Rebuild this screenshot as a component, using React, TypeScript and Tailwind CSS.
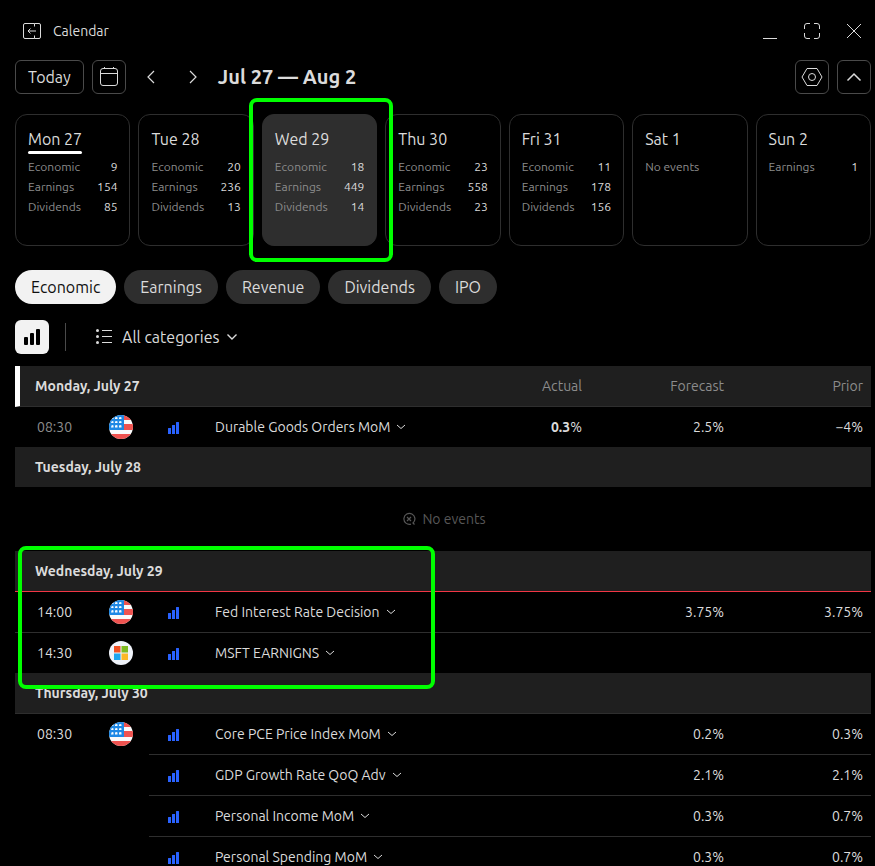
import { Fragment, ReactNode, useState } from "react";

type Day = {
  label: string;
  counts: [string, number][];
  current?: boolean;
  selected?: boolean;
};

type CalendarEvent = {
  time?: string;
  logo?: "us" | "msft";
  past?: boolean;
  name: string;
  actual?: string;
  forecast?: string;
  prior?: string;
};

type Section = {
  title: string;
  columns?: boolean;
  now?: boolean;
  marked?: boolean;
  events: CalendarEvent[];
};

const days: Day[] = [
  { label: "Mon 27", counts: [["Economic", 9], ["Earnings", 154], ["Dividends", 85]], current: true },
  { label: "Tue 28", counts: [["Economic", 20], ["Earnings", 236], ["Dividends", 13]] },
  { label: "Wed 29", counts: [["Economic", 18], ["Earnings", 449], ["Dividends", 14]], selected: true },
  { label: "Thu 30", counts: [["Economic", 23], ["Earnings", 558], ["Dividends", 23]] },
  { label: "Fri 31", counts: [["Economic", 11], ["Earnings", 178], ["Dividends", 156]] },
  { label: "Sat 1", counts: [] },
  { label: "Sun 2", counts: [["Earnings", 1]] },
];

const tabs = ["Economic", "Earnings", "Revenue", "Dividends", "IPO"];

const sections: Section[] = [
  {
    title: "Monday, July 27",
    columns: true,
    events: [
      { time: "08:30", logo: "us", past: true, name: "Durable Goods Orders MoM", actual: "0.3", forecast: "2.5%", prior: "−4%" },
    ],
  },
  { title: "Tuesday, July 28", events: [] },
  {
    title: "Wednesday, July 29",
    now: true,
    marked: true,
    events: [
      { time: "14:00", logo: "us", name: "Fed Interest Rate Decision", forecast: "3.75%", prior: "3.75%" },
      { time: "14:30", logo: "msft", name: "MSFT EARNIGNS" },
    ],
  },
  {
    title: "Thursday, July 30",
    events: [
      { time: "08:30", logo: "us", name: "Core PCE Price Index MoM", forecast: "0.2%", prior: "0.3%" },
      { name: "GDP Growth Rate QoQ Adv", forecast: "2.1%", prior: "2.1%" },
      { name: "Personal Income MoM", forecast: "0.3%", prior: "0.7%" },
      { name: "Personal Spending MoM", forecast: "0.3%", prior: "0.7%" },
    ],
  },
];

function Icon({ size, children }: { size: number; children: ReactNode }) {
  return (
    <svg width={size} height={size} viewBox={`0 0 ${size} ${size}`} fill="none" stroke="currentColor" aria-hidden="true" className="shrink-0">
      {children}
    </svg>
  );
}

function Chevron() {
  return (
    <svg width="10" height="6" viewBox="0 0 10 6" fill="none" stroke="currentColor" aria-hidden="true" className="shrink-0">
      <path d="M1 1l4 3.5L9 1" />
    </svg>
  );
}

function UsFlag() {
  return (
    <svg width="24" height="24" viewBox="0 0 24 24" role="img" aria-label="United States" className="block">
      <clipPath id="flag">
        <circle cx="12" cy="12" r="12" />
      </clipPath>
      <g clipPath="url(#flag)">
        <path fill="#fafafa" d="M0 0h24v24H0z" />
        <path fill="#ef5350" d="M15 0h9v5h-9zM15 9h9v6h-9zM0 19h24v5H0z" />
        <path fill="#1e88e5" d="M0 0h15v15H0z" />
        <g fill="#f5faff">
          <path d="M2 4l.5-1.500L3.500 2l1 .5V4zM6 4V2.500L7.500 2l1 .5V4zM10 4V2.500l1.500-.5 1 .5V4z" />
          <path d="M2 8l.5-1.500L3.500 6l1 .5V8zM6 8V6.500L7.500 6l1 .5V8zM10 8V6.500l1.500-.5 1 .5V8z" />
          <path d="M2 12.500l.5-2 1-.5 1 .5v2zM6 12.500v-2l1.500-.5 1 .5v2zM10 12.500v-2l1.500-.5 1 .5v2z" />
        </g>
      </g>
    </svg>
  );
}

function MsftLogo() {
  return (
    <svg width="24" height="24" viewBox="0 0 24 24" role="img" aria-label="Microsoft" className="block">
      <circle cx="12" cy="12" r="12" fill="#f0f3fa" />
      <path fill="#f25022" d="M5 5h6.500v6.500H5z" />
      <path fill="#7fba22" d="M12.500 5H19v6.500h-6.500z" />
      <path fill="#1ea5f0" d="M5 12.500h6.500V19H5z" />
      <path fill="#fdb827" d="M12.500 12.500H19V19h-6.500z" />
    </svg>
  );
}

function DayCard({ day }: { day: Day }) {
  return (
    <li className="relative min-w-0">
      <button
        type="button"
        className={`flex h-33 w-full flex-col items-start rounded-xl border border-[#2e2e2e] px-3 pt-3 text-left ${
          day.selected ? "bg-[#2e2e2e]" : ""
        }`}
      >
        <span className="relative mb-1.5 text-base leading-6">
          {day.label}
          {day.current && <span className="absolute inset-x-0 top-full h-[3px] rounded-sm bg-white" />}
        </span>
        {day.counts.length === 0 && <span className="text-xs leading-5 text-[#8c8c8c]">No events</span>}
        {day.counts.map(([name, count]) => (
          <span key={name} className="flex w-full justify-between text-xs leading-5">
            <span className="text-[#8c8c8c]">{name}</span>
            <span>{count}</span>
          </span>
        ))}
      </button>
      {day.selected && (
        <div className="pointer-events-none absolute -top-4 -right-4 -bottom-4 -left-[13px] z-10 rounded-lg border-4 border-[#00ff00]" />
      )}
    </li>
  );
}

function EventRow({ event, open, last }: { event: CalendarEvent; open: boolean; last: boolean }) {
  const line = last ? "" : "border-b border-[#2e2e2e]";
  // rows that share a time leave the left side open
  const leftLine = open && !last ? "border-b border-transparent" : line;

  return (
    <tr className={last ? "h-10" : "h-[41px]"}>
      <td className={`pl-[22px] ${leftLine} ${event.past ? "text-[#8c8c8c]" : ""}`}>{event.time}</td>
      <td className={leftLine}>
        {event.logo === "us" && <UsFlag />}
        {event.logo === "msft" && <MsftLogo />}
      </td>
      <td className={`pt-0.5 pl-[19px] ${line}`}>
        <svg width="12" height="12" viewBox="0 0 12 12" fill="#2962ff" role="img" aria-label="High importance" className="block">
          <path d="M0 6.500Q0 6 .5 6H3v6H0zM4 3.500Q4 3 4.500 3H7v9H4zM8 .5Q8 0 8.500 0h2q.5 0 .5.5V12H8z" />
        </svg>
      </td>
      <td className={line}>
        <button type="button" className="flex items-center gap-1.5">
          {event.name}
          <Chevron />
        </button>
      </td>
      <td className={`pr-2 text-right ${line}`}>
        {event.actual && (
          <>
            <b>{event.actual}</b>%
          </>
        )}
      </td>
      <td className={`pr-2 text-right ${line}`}>{event.forecast}</td>
      <td className={`pr-2 text-right ${line}`}>{event.prior}</td>
    </tr>
  );
}

export default function App() {
  const [tab, setTab] = useState("Economic");

  return (
    <div className="flex h-screen flex-col overflow-hidden bg-black pr-1 pl-[15px] font-['Ubuntu','Noto_Sans',sans-serif] text-sm text-[#dbdbdb]">
      {/* Window bar */}
      <header className="flex h-15 shrink-0 items-center justify-between px-2 pt-0.5">
        <div className="flex items-center gap-3">
          <Icon size={18}>
            <path d="M11.500 1.500H2q-1.500 0-1.500 1.500v12q0 1.500 1.500 1.500h9.500M11.500 1.500H16q1.500 0 1.500 1.500v12q0 1.500-1.500 1.500h-4.500M11.500 1.500v3M11.500 13.500v3M13 9H5M7.500 6.500L5 9l2.500 2.500" />
          </Icon>
          <h1>Calendar</h1>
        </div>
        <div className="flex items-center gap-6">
          <button type="button" aria-label="Minimize">
            <Icon size={18}>
              <path d="M2 16.500h14" />
            </Icon>
          </button>
          <button type="button" aria-label="Maximize">
            <Icon size={18}>
              <path d="M1.500 7V4q0-2.500 2.500-2.500h3M11 1.500h3q2.500 0 2.500 2.500v3M16.500 11v3q0 2.500-2.500 2.500h-3M7 16.500H4q-2.500 0-2.500-2.500v-3" />
            </Icon>
          </button>
          <button type="button" aria-label="Close">
            <Icon size={18}>
              <path d="M2 2l14 14M16 2L2 16" />
            </Icon>
          </button>
        </div>
      </header>

      {/* Week navigation */}
      <div className="flex shrink-0 items-center">
        <button type="button" className="h-[34px] rounded-md border border-[#4a4a4a] px-3 text-base">
          Today
        </button>
        <button type="button" aria-label="Pick a date" className="ml-2 flex size-[34px] items-center justify-center rounded-md border border-[#4a4a4a]">
          <Icon size={20}>
            <path d="M4 1.500h12q2.500 0 2.500 2.500v12q0 2.500-2.500 2.500H4q-2.500 0-2.500-2.500V4q0-2.500 2.500-2.500zM1.500 6.500h17M5.500 0v2M14.500 0v2" />
          </Icon>
        </button>
        <button type="button" aria-label="Previous week" className="ml-2 flex size-[34px] items-center justify-center">
          <Icon size={16}>
            <path d="M11 2L5 8l6 6" strokeWidth="1.200" />
          </Icon>
        </button>
        <button type="button" aria-label="Next week" className="ml-2 flex size-[34px] items-center justify-center">
          <Icon size={16}>
            <path d="M5 2l6 6-6 6" strokeWidth="1.200" />
          </Icon>
        </button>
        <h2 className="ml-2 text-xl font-bold">Jul 27 — Aug 2</h2>
        <div className="ml-auto flex gap-2">
          <button type="button" aria-label="Settings" className="flex size-[34px] items-center justify-center rounded-md border border-[#4a4a4a]">
            <Icon size={22}>
              <path d="M6 2.500h10L21 11l-5 8.500H6L1 11z" />
              <circle cx="11" cy="11" r="3.500" />
            </Icon>
          </button>
          <button type="button" aria-label="Collapse" className="flex size-[34px] items-center justify-center rounded-md border border-[#4a4a4a]">
            <Icon size={16}>
              <path d="M1.500 11.500L8 5l6.500 6.500" strokeWidth="1.500" />
            </Icon>
          </button>
        </div>
      </div>

      <ul className="mt-5 grid shrink-0 grid-cols-7 gap-2">
        {days.map((day) => (
          <DayCard key={day.label} day={day} />
        ))}
      </ul>

      {/* Event type tabs */}
      <div className="mt-6 flex shrink-0 gap-2">
        {tabs.map((name) => (
          <button
            key={name}
            type="button"
            onClick={() => setTab(name)}
            className={`h-[34px] rounded-full px-4 text-base ${
              tab === name ? "bg-[#f2f2f2] text-[#0f0f0f]" : "bg-[#2e2e2e]"
            }`}
          >
            {name}
          </button>
        ))}
      </div>

      {/* Filters */}
      <div className="mt-4 flex shrink-0 items-center">
        <button type="button" aria-label="High importance only" className="flex size-[34px] items-center justify-center rounded-md bg-[#f2f2f2] text-black">
          <svg width="18" height="18" viewBox="0 0 18 18" fill="currentColor" aria-hidden="true">
            <rect x="1" y="9" width="4" height="8" rx="1" />
            <rect x="7" y="5" width="4" height="12" rx="1" />
            <rect x="13" y="1" width="4" height="16" rx="1" />
          </svg>
        </button>
        <div className="mx-4 h-7 w-px bg-[#4a4a4a]" />
        <button type="button" className="ml-3.5 flex items-center gap-2 text-base">
          <Icon size={18}>
            <path d="M6 2.500h10M6 8.500h10M6 14.500h10" />
            <g fill="currentColor" stroke="none">
              <circle cx="1.500" cy="2.500" r="1.500" />
              <circle cx="1.500" cy="8.500" r="1.500" />
              <circle cx="1.500" cy="14.500" r="1.500" />
            </g>
          </Icon>
          All categories
          <svg width="10" height="6" viewBox="0 0 10 6" fill="none" stroke="currentColor" aria-hidden="true">
            <path d="M.5.5L5 5 9.500.5" strokeWidth="1.400" />
          </svg>
        </button>
      </div>

      {/* Events */}
      <div className="mt-3 min-h-0 flex-1 overflow-y-auto [scrollbar-width:none]">
        <table className="w-full table-fixed border-separate border-spacing-0">
          <colgroup>
            <col className="w-[94px]" />
            <col className="w-10" />
            <col className="w-[66px]" />
            <col />
            <col className="w-[110px]" />
            <col className="w-[142px]" />
            <col className="w-[139px]" />
          </colgroup>
          <tbody>
            {sections.map((section) => {
              const line = section.now ? "border-b border-b-[#f23645]" : section.events.length ? "border-b border-b-[#2e2e2e]" : "";
              return (
                <Fragment key={section.title}>
                  <tr className={`bg-[#1f1f1f] ${line ? "h-[41px]" : "h-10"}`}>
                    <th
                      colSpan={4}
                      className={`relative text-left font-bold ${line} ${
                        section.columns ? "border-l-[5px] border-l-white pl-[15px]" : "pl-5"
                      }`}
                    >
                      {section.title}
                      {section.marked && (
                        <div className="pointer-events-none absolute -top-[5px] left-[3px] z-10 h-[143px] w-[417px] rounded-lg border-4 border-[#00ff00]" />
                      )}
                    </th>
                    {["Actual", "Forecast", "Prior"].map((name) => (
                      <th key={name} className={`pr-2 text-right font-normal text-[#8c8c8c] ${line}`}>
                        {section.columns && name}
                      </th>
                    ))}
                  </tr>
                  {section.events.length === 0 && (
                    <tr className="h-16">
                      <td colSpan={7} className="text-[#575757]">
                        <div className="flex items-center justify-center gap-1.5 pl-0.5">
                          <Icon size={14}>
                            <path d="M12.500 12.500l-1.500-1.500A5.500 5.500 0 1 0 9 12.100M5 5l4 4M9 5L5 9" strokeWidth="1.200" />
                          </Icon>
                          No events
                        </div>
                      </td>
                    </tr>
                  )}
                  {section.events.map((event, i) => {
                    const next = section.events[i + 1];
                    return <EventRow key={event.name} event={event} open={!!next && !next.time} last={!next && !!event.time} />;
                  })}
                </Fragment>
              );
            })}
          </tbody>
        </table>
      </div>
    </div>
  );
}
